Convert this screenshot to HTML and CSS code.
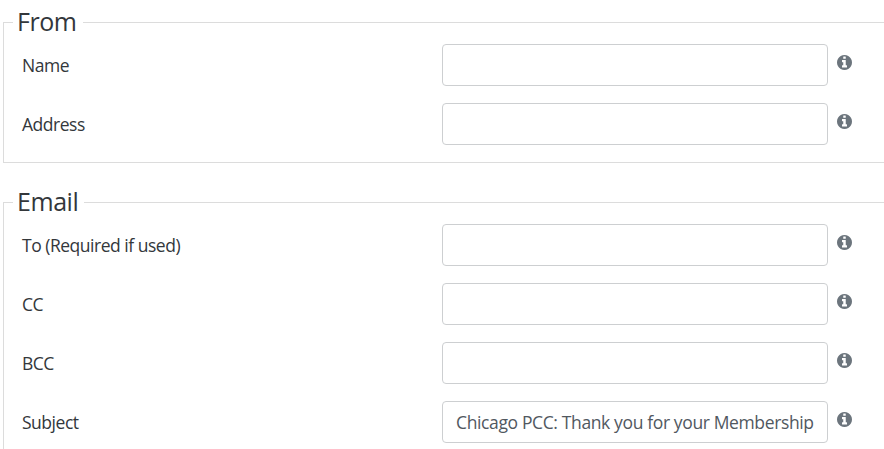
FILE: index.html
```html
<!DOCTYPE html>
<html lang="en">
<head>
  <meta charset="UTF-8" />
  <meta name="viewport" content="width=device-width, initial-scale=1.0"/>
  <title>Email Settings</title>
  <link rel="stylesheet" href="styles.css">
</head>
<body>

  <!-- Info icon shared by all rows -->
  <svg class="icon-defs" width="0" height="0">
    <symbol id="info" viewBox="128 128 1536 1536">
      <path d="M1152 1376v-160q0-14-9-23t-23-9h-96v-512q0-14-9-23t-23-9h-320q-14 0-23 9t-9 23v160q0 14 9 23t23 9h96v320h-96q-14 0-23 9t-9 23v160q0 14 9 23t23 9h448q14 0 23-9t9-23zM1024 480v-160q0-14-9-23t-23-9h-192q-14 0-23 9t-9 23v160q0 14 9 23t23 9h192q14 0 23-9t9-23zM1664 896q0 209-103 385.5t-279.5 279.5-385.5 103-385.5-103-279.5-279.5-103-385.5 103-385.5 279.5-279.5 385.5-103 385.5 103 279.5 279.5 103 385.5z"/>
    </symbol>
  </svg>

  <form class="settings">
    <!-- From -->
    <fieldset class="group">
      <legend>From</legend>
      <div class="row">
        <label for="from-name">Name</label>
        <input type="text" id="from-name">
        <svg class="info"><use href="#info"/></svg>
      </div>
      <div class="row">
        <label for="from-address">Address</label>
        <input type="text" id="from-address">
        <svg class="info"><use href="#info"/></svg>
      </div>
    </fieldset>

    <!-- Email -->
    <fieldset class="group">
      <legend>Email</legend>
      <div class="row">
        <label for="to">To (Required if used)</label>
        <input type="text" id="to">
        <svg class="info"><use href="#info"/></svg>
      </div>
      <div class="row">
        <label for="cc">CC</label>
        <input type="text" id="cc">
        <svg class="info"><use href="#info"/></svg>
      </div>
      <div class="row">
        <label for="bcc">BCC</label>
        <input type="text" id="bcc">
        <svg class="info"><use href="#info"/></svg>
      </div>
      <div class="row">
        <label for="subject">Subject</label>
        <input type="text" id="subject" value="Chicago PCC: Thank you for your Membership">
        <svg class="info"><use href="#info"/></svg>
      </div>
    </fieldset>
  </form>

</body>
</html>
```
FILE: styles.css
```css
* {
  box-sizing: border-box;
}

body {
  margin: 0;
  height: 449px;
  overflow: hidden;
  background: #fff;
  color: #33373b;
  font-family: "Segoe UI", "Open Sans", sans-serif;
  font-size: 17.5px;
  line-height: 27px;
}

.icon-defs {
  display: block;
}

.settings {
  height: 449px;
  padding: 4px 0 0 3px;
  overflow: hidden;
}

.group {
  min-width: 0;
  margin: 0 0 21px;
  padding: 4px 0 0 9px;
  border: 1px solid #dcdcdc;
  border-right: 0;
}

legend {
  height: 36px;
  padding: 0 6px 0 4px;
  font-size: 25px;
  line-height: 35px;
  letter-spacing: -0.45px;
}

.row {
  display: grid;
  grid-template-columns: 420px 386px 24px;
  align-items: start;
  height: 59px;
  padding-left: 9px;
}

label {
  padding-top: 8px;
  letter-spacing: -0.48px;
}

input {
  width: 100%;
  height: 42px;
  padding: 6px 13px;
  border: 1px solid #cdcfd1;
  border-radius: 4px;
  background: #fff;
  color: #51585f;
  font: inherit;
  letter-spacing: -0.37px;
}

.info {
  width: 15px;
  height: 15px;
  margin: 11px 0 0 9px;
  fill: #6c757d;
}
```
